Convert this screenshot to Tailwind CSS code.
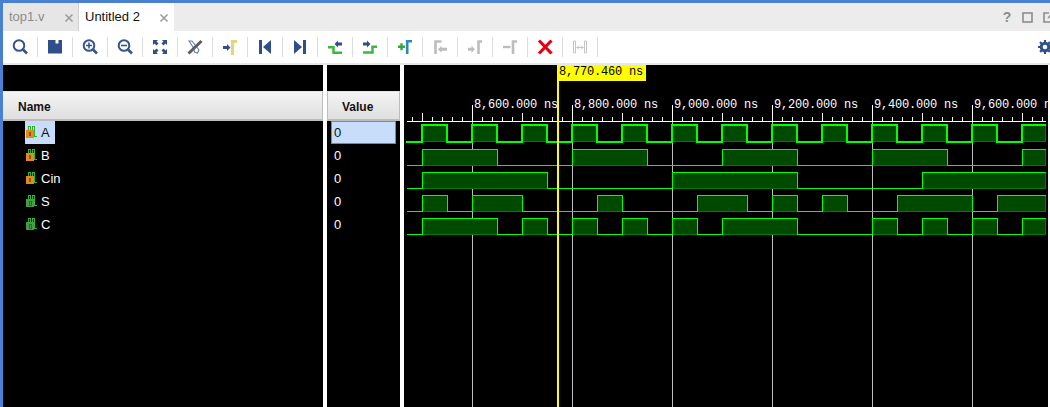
<!DOCTYPE html>
<html>
<head>
<meta charset="utf-8">
<script src="https://cdn.jsdelivr.net/npm/@tailwindcss/browser@4"></script>
</head>
<body class="m-0 bg-black">
<div class="w-[1050px] h-[407px] overflow-hidden bg-[#4a80d2] pt-[3px] pl-[3px] flex flex-col font-['Liberation_Sans',sans-serif]">

  <!-- tabs -->
  <div class="h-[28px] shrink-0 bg-[#ececec] flex items-stretch text-[13px]">
    <div class="w-[76px] bg-[#e6e6e6] border-r border-[#cfcfcf] flex items-center justify-between pl-[6px] pr-[4px] text-[#8c8c8c]">
      <span>top1.v</span>
      <svg width="10" height="10" viewBox="0 0 10 10" class="mt-[2px]"><path d="M1.5 1.5L8.5 8.5M8.5 1.5L1.5 8.5" stroke="#9c9c9c" stroke-width="1.6"/></svg>
    </div>
    <div class="w-[95px] bg-white flex items-center justify-between pl-[6px] pr-[5px] text-[#111]">
      <span>Untitled 2</span>
      <svg width="10" height="10" viewBox="0 0 10 10" class="mt-[2px]"><path d="M1.5 1.5L8.5 8.5M8.5 1.5L1.5 8.5" stroke="#9c9c9c" stroke-width="1.6"/></svg>
    </div>
    <div class="ml-auto flex items-center gap-[10px] mr-[-4px]">
      <span class="text-[14px] font-bold text-[#8c8c8c] w-[10px] text-center">?</span>
      <svg width="11" height="11" viewBox="0 0 11 11"><rect x="1" y="1" width="9" height="9" fill="none" stroke="#8c8c8c" stroke-width="1.6"/></svg>
      <svg width="11" height="11" viewBox="0 0 11 11"><path d="M6 1H1V10H10V5" fill="none" stroke="#8c8c8c" stroke-width="1.6"/><path d="M5 6L10 1" stroke="#8c8c8c" stroke-width="1.4"/></svg>
    </div>
  </div>

  <!-- toolbar -->
  <div class="h-[32px] shrink-0 bg-white flex items-center overflow-hidden">
    <div class="w-[35px] h-5 border-r border-[#dcdcdc] flex items-center justify-center"><svg width="20" height="20" viewBox="0 0 20 20" fill="none" stroke="#35558f"><circle cx="9" cy="8.5" r="5.3" stroke-width="2"/><path d="M13 12.5L17 16.5" stroke-width="2.6"/></svg></div>
    <div class="w-[35px] h-5 border-r border-[#dcdcdc] flex items-center justify-center"><svg width="20" height="20" viewBox="0 0 20 20"><path d="M3 3H17V16.5H3Z" fill="#2f4f8c"/><rect x="10.5" y="3" width="3" height="3.5" fill="#fff"/></svg></div>
    <div class="w-[35px] h-5 border-r border-[#dcdcdc] flex items-center justify-center"><svg width="20" height="20" viewBox="0 0 20 20" fill="none" stroke="#35558f"><circle cx="9" cy="8.5" r="5.3" stroke-width="2"/><path d="M6 8.5H12M9 5.5V11.5" stroke-width="1.6"/><path d="M13 12.5L17 16.5" stroke-width="2.6"/></svg></div>
    <div class="w-[35px] h-5 border-r border-[#dcdcdc] flex items-center justify-center"><svg width="20" height="20" viewBox="0 0 20 20" fill="none" stroke="#35558f"><circle cx="9" cy="8.5" r="5.3" stroke-width="2"/><path d="M6 8.5H12" stroke-width="1.6"/><path d="M13 12.5L17 16.5" stroke-width="2.6"/></svg></div>
    <div class="w-[35px] h-5 border-r border-[#dcdcdc] flex items-center justify-center"><svg width="20" height="20" viewBox="0 0 20 20" fill="#2f4f8c"><path d="M3 3H8L6.5 4.5L8.5 6.5L6.5 8.5L4.5 6.5L3 8Z"/><path d="M17 3H12L13.5 4.5L11.5 6.5L13.5 8.5L15.5 6.5L17 8Z"/><path d="M3 17H8L6.5 15.5L8.5 13.5L6.5 11.5L4.5 13.5L3 12Z"/><path d="M17 17H12L13.5 15.5L11.5 13.5L13.5 11.5L15.5 13.5L17 12Z"/></svg></div>
    <div class="w-[35px] h-5 border-r border-[#dcdcdc] flex items-center justify-center"><svg width="20" height="20" viewBox="0 0 20 20" fill="none"><path d="M4 4H7L14 13L12.5 16L9.5 15L8 10Z" stroke="#5f7fb5" stroke-width="1.1"/><path d="M3.5 16.5L16.5 4" stroke="#5c5c5c" stroke-width="3"/></svg></div>
    <div class="w-[35px] h-5 border-r border-[#dcdcdc] flex items-center justify-center"><svg width="20" height="20" viewBox="0 0 20 20"><path d="M3 9H7V7L10.5 10.5L7 14V12H3Z" fill="#2f4f8c"/><path d="M12.5 18V4.5H17" fill="none" stroke="#e8d27a" stroke-width="3"/></svg></div>
    <div class="w-[35px] h-5 border-r border-[#dcdcdc] flex items-center justify-center"><svg width="20" height="20" viewBox="0 0 20 20" fill="#2f4f8c"><rect x="4" y="3" width="3" height="14"/><path d="M16 3L8 10L16 17Z"/></svg></div>
    <div class="w-[35px] h-5 border-r border-[#dcdcdc] flex items-center justify-center"><svg width="20" height="20" viewBox="0 0 20 20" fill="#2f4f8c"><rect x="13" y="3" width="3" height="14"/><path d="M4 3L12 10L4 17Z"/></svg></div>
    <div class="w-[35px] h-5 border-r border-[#dcdcdc] flex items-center justify-center"><svg width="20" height="20" viewBox="0 0 20 20"><path d="M3 10.3H8.5V15.7H17" fill="none" stroke="#3db83d" stroke-width="2.5"/><path d="M9.5 7L13 3.5V5.5H17V8.5H13V10.5Z" fill="#2f4f8c"/></svg></div>
    <div class="w-[35px] h-5 border-r border-[#dcdcdc] flex items-center justify-center"><svg width="20" height="20" viewBox="0 0 20 20"><path d="M3 15.5H12.5V9.7H17" fill="none" stroke="#3db83d" stroke-width="2.5"/><path d="M10.5 7L7 3.5V5.5H3V8.5H7V10.5Z" fill="#2f4f8c"/></svg></div>
    <div class="w-[35px] h-5 border-r border-[#dcdcdc] flex items-center justify-center"><svg width="20" height="20" viewBox="0 0 20 20"><path d="M3 9.8H10M6.5 6.3V13.3" stroke="#3aa63a" stroke-width="2.4"/><path d="M12.2 17V4.3H17" fill="none" stroke="#2e86c0" stroke-width="2.6"/></svg></div>
    <div class="w-[35px] h-5 border-r border-[#dcdcdc] flex items-center justify-center"><svg width="20" height="20" viewBox="0 0 20 20"><path d="M5.5 17V4.5H11.5" fill="none" stroke="#bdbdbd" stroke-width="2.6"/><path d="M8 12.3L11.5 8.8V10.8H17V13.8H11.5V15.8Z" fill="#bdbdbd"/></svg></div>
    <div class="w-[35px] h-5 border-r border-[#dcdcdc] flex items-center justify-center"><svg width="20" height="20" viewBox="0 0 20 20"><path d="M3 10.8H6.5V8.8L10 12.3L6.5 15.8V13.8H3Z" fill="#bdbdbd"/><path d="M13.5 17V4.5H17" fill="none" stroke="#bdbdbd" stroke-width="2.6"/></svg></div>
    <div class="w-[35px] h-5 border-r border-[#dcdcdc] flex items-center justify-center"><svg width="20" height="20" viewBox="0 0 20 20"><path d="M3 10H10.5" stroke="#bdbdbd" stroke-width="2.4"/><path d="M13 17V4.5H17" fill="none" stroke="#bdbdbd" stroke-width="2.6"/></svg></div>
    <div class="w-[35px] h-5 border-r border-[#dcdcdc] flex items-center justify-center"><svg width="20" height="20" viewBox="0 0 20 20"><path d="M4 3.5L16.5 16.5M16.5 3.5L4 16.5" stroke="#e60012" stroke-width="3.2"/></svg></div>
    <div class="w-[35px] h-5 border-r border-[#dcdcdc] flex items-center justify-center"><svg width="20" height="20" viewBox="0 0 20 20" fill="none" stroke="#c4c4c4"><path d="M3.5 4V16H5.5V4ZM14.5 4V16H16.5V4Z" stroke-width="1"/><path d="M6.5 10.5H13.5M7 10.5L9 8.5M7 10.5L9 12.5M13 10.5L11 8.5M13 10.5L11 12.5" stroke-width="1"/></svg></div>
    <div class="ml-auto mr-[-2px] w-[14px] h-[20px] flex items-center"><svg width="14" height="14" viewBox="0 0 14 14"><circle cx="7" cy="7" r="3.8" fill="none" stroke="#2f4f8c" stroke-width="3"/><path d="M7 0V14M0 7H14M2 2L12 12M12 2L2 12" stroke="#2f4f8c" stroke-width="2.2" stroke-dasharray="2.4 9.2"/></svg></div>
  </div>
  <div class="h-[2px] shrink-0 bg-[#e8e8e8]"></div>

  <!-- main -->
  <div class="flex-1 min-h-0 flex bg-white text-[13px]">
    <!-- name pane -->
    <div class="w-[320px] bg-black flex flex-col">
      <div class="h-[26px] shrink-0"></div>
      <div class="h-[30px] shrink-0 bg-gradient-to-b from-[#f4f4f4] to-[#dfdfdf] border-t border-b-2 border-r border-[#bdbdbd] border-t-[#e4e4e4] flex items-center pl-[15px] pt-[2px] text-[12px] font-bold text-[#111]">Name</div>
      <div class="h-[23px] flex items-center pl-[22px]">
        <div class="h-[23px] w-[30px] bg-[#c8dcfb] flex items-center text-[#111]">
          <svg width="13" height="12" viewBox="0 0 13 12" class="ml-[1px] mb-[2px]" shape-rendering="crispEdges"><path d="M2 4V0.5H4V4M6 4V0.5H8V10.5H11" fill="none" stroke="#2db52d"/><rect x="0" y="4" width="8" height="8" fill="#e5891f"/><rect x="3" y="6" width="2" height="4" fill="#8a5a1a"/></svg>
          <span class="ml-[2px] mt-[1px]">A</span>
        </div>
      </div>
      <div class="h-[23px] flex items-center pl-[22px] text-white">
        <svg width="13" height="12" viewBox="0 0 13 12" class="ml-[1px] mb-[2px]" shape-rendering="crispEdges"><path d="M2 4V0.5H4V4M6 4V0.5H8V10.5H11" fill="none" stroke="#2db52d"/><rect x="0" y="4" width="8" height="8" fill="#e5891f"/><rect x="3" y="6" width="2" height="4" fill="#8a5a1a"/></svg>
        <span class="ml-[2px] mt-[1px]">B</span>
      </div>
      <div class="h-[23px] flex items-center pl-[22px] text-white">
        <svg width="13" height="12" viewBox="0 0 13 12" class="ml-[1px] mb-[2px]" shape-rendering="crispEdges"><path d="M2 4V0.5H4V4M6 4V0.5H8V10.5H11" fill="none" stroke="#2db52d"/><rect x="0" y="4" width="8" height="8" fill="#e5891f"/><rect x="3" y="6" width="2" height="4" fill="#8a5a1a"/></svg>
        <span class="ml-[2px] mt-[1px]">Cin</span>
      </div>
      <div class="h-[23px] flex items-center pl-[22px] text-white">
        <svg width="13" height="12" viewBox="0 0 13 12" class="ml-[1px] mb-[2px]" shape-rendering="crispEdges"><path d="M2 4V0.5H4V4M6 4V0.5H8V10.5H11" fill="none" stroke="#2db52d"/><rect x="0" y="4" width="8" height="8" fill="#479a47"/><rect x="3" y="6" width="2" height="4" fill="none" stroke="#2a6a2a"/></svg>
        <span class="ml-[2px] mt-[1px]">S</span>
      </div>
      <div class="h-[23px] flex items-center pl-[22px] text-white">
        <svg width="13" height="12" viewBox="0 0 13 12" class="ml-[1px] mb-[2px]" shape-rendering="crispEdges"><path d="M2 4V0.5H4V4M6 4V0.5H8V10.5H11" fill="none" stroke="#2db52d"/><rect x="0" y="4" width="8" height="8" fill="#479a47"/><rect x="3" y="6" width="2" height="4" fill="none" stroke="#2a6a2a"/></svg>
        <span class="ml-[2px] mt-[1px]">C</span>
      </div>
    </div>
    <div class="w-[4px] shrink-0"></div>
    <!-- value pane -->
    <div class="w-[73px] bg-black flex flex-col">
      <div class="h-[26px] shrink-0"></div>
      <div class="h-[30px] shrink-0 bg-gradient-to-b from-[#f4f4f4] to-[#dfdfdf] border border-b-2 border-[#bdbdbd] border-t-[#e4e4e4] flex items-center pl-[14px] pt-[2px] text-[12px] font-bold text-[#111]">Value</div>
      <div class="h-[23px] pl-[4px] pr-[4px]">
        <div class="h-[23px] bg-[#c8dcfb] border border-[#5b8fc7] flex items-center pl-[2px] pt-[1px] text-[#111]">0</div>
      </div>
      <div class="h-[23px] flex items-center pl-[7px] pt-[1px] text-white">0</div>
      <div class="h-[23px] flex items-center pl-[7px] pt-[1px] text-white">0</div>
      <div class="h-[23px] flex items-center pl-[7px] pt-[1px] text-white">0</div>
      <div class="h-[23px] flex items-center pl-[7px] pt-[1px] text-white">0</div>
    </div>
    <div class="w-[4px] shrink-0"></div>
    <!-- wave pane: page x = svg x + 404, page y = svg y + 65 -->
    <div class="w-[644px] bg-black relative overflow-hidden">
      <svg width="644" height="342" viewBox="404 65 644 342" class="block font-['Liberation_Mono',monospace]" shape-rendering="crispEdges">
        <!-- grid lines -->
        <path d="M472.5 121V407M572.5 121V407M672.5 121V407M772.5 121V407M872.5 121V407M972.5 121V407" stroke="#bfbfbf" fill="none"/>
        <path d="M472.5 105V121M572.5 105V121M672.5 105V121M772.5 105V121M872.5 105V121M972.5 105V121" stroke="#fff" fill="none"/>
        <!-- ruler -->
        <path d="M407 121.5H1046" stroke="#fff"/>
        <path d="M412.5 117V121M432.5 117V121M442.5 117V121M452.5 117V121M462.5 117V121M482.5 117V121M492.5 117V121M502.5 117V121M512.5 117V121M532.5 117V121M542.5 117V121M552.5 117V121M562.5 117V121M582.5 117V121M592.5 117V121M602.5 117V121M612.5 117V121M632.5 117V121M642.5 117V121M652.5 117V121M662.5 117V121M682.5 117V121M692.5 117V121M702.5 117V121M712.5 117V121M732.5 117V121M742.5 117V121M752.5 117V121M762.5 117V121M782.5 117V121M792.5 117V121M802.5 117V121M812.5 117V121M832.5 117V121M842.5 117V121M852.5 117V121M862.5 117V121M882.5 117V121M892.5 117V121M902.5 117V121M912.5 117V121M932.5 117V121M942.5 117V121M952.5 117V121M962.5 117V121M982.5 117V121M992.5 117V121M1002.5 117V121M1012.5 117V121M1032.5 117V121M1042.5 117V121" stroke="#fff"/>
        <path d="M422.5 113V121M522.5 113V121M622.5 113V121M722.5 113V121M822.5 113V121M922.5 113V121M1022.5 113V121" stroke="#fff"/>
        <g fill="#fff" font-size="12" letter-spacing="-0.2" shape-rendering="auto">
          <text x="474" y="108">8,600.000 ns</text>
          <text x="574" y="108">8,800.000 ns</text>
          <text x="674" y="108">9,000.000 ns</text>
          <text x="774" y="108">9,200.000 ns</text>
          <text x="874" y="108">9,400.000 ns</text>
          <text x="974" y="108">9,600.000 ns</text>
        </g>
        <!-- fills with a dim outline; bright signal lines go on top -->
        <g fill="#004a00" stroke="#007a00" transform="translate(0.5 0.5)">
          <path d="M422 125H447V141H422ZM472 125H497V141H472ZM522 125H547V141H522ZM572 125H597V141H572ZM622 125H647V141H622ZM672 125H697V141H672ZM722 125H747V141H722ZM772 125H797V141H772ZM822 125H847V141H822ZM872 125H897V141H872ZM922 125H947V141H922ZM972 125H997V141H972ZM1022 125H1045V141H1022Z"/>
          <path d="M422 149H497V165H422ZM572 149H647V165H572ZM722 149H797V165H722ZM872 149H947V165H872ZM1022 149H1045V165H1022Z"/>
          <path d="M422 172H547V188H422ZM672 172H797V188H672ZM922 172H1045V188H922Z"/>
          <path d="M422 195H447V211H422ZM472 195H522V211H472ZM597 195H622V211H597ZM697 195H747V211H697ZM772 195H797V211H772ZM822 195H847V211H822ZM897 195H972V211H897ZM997 195H1045V211H997Z"/>
          <path d="M422 218H497V234H422ZM522 218H547V234H522ZM572 218H597V234H572ZM622 218H647V234H622ZM672 218H697V234H672ZM722 218H797V234H722ZM872 218H897V234H872ZM922 218H947V234H922ZM972 218H997V234H972ZM1022 218H1045V234H1022Z"/>
        </g>
        <!-- signal lines -->
        <g fill="none" stroke="#00ff00">
          <path stroke-width="2" d="M406 142H422V125H447V142H472V125H497V142H522V125H547V142H572V125H597V142H622V125H647V142H672V125H697V142H722V125H747V142H772V125H797V142H822V125H847V142H872V125H897V142H922V125H947V142H972V125H997V142H1022V125H1046"/>
          <path d="M407 165.5H422.5V149.5H497.5V165.5H572.5V149.5H647.5V165.5H722.5V149.5H797.5V165.5H872.5V149.5H947.5V165.5H1022.5V149.5H1046"/>
          <path d="M407 188.5H422.5V172.5H547.5V188.5H672.5V172.5H797.5V188.5H922.5V172.5H1046"/>
          <path d="M407 211.5H422.5V195.5H447.5V211.5H472.5V195.5H522.5V211.5H597.5V195.5H622.5V211.5H697.5V195.5H747.5V211.5H772.5V195.5H797.5V211.5H822.5V195.5H847.5V211.5H897.5V195.5H972.5V211.5H997.5V195.5H1046"/>
          <path d="M407 234.5H422.5V218.5H497.5V234.5H522.5V218.5H547.5V234.5H572.5V218.5H597.5V234.5H622.5V218.5H647.5V234.5H672.5V218.5H697.5V234.5H722.5V218.5H797.5V234.5H872.5V218.5H897.5V234.5H922.5V218.5H947.5V234.5H972.5V218.5H997.5V234.5H1022.5V218.5H1046"/>
        </g>
        <!-- cursor -->
        <rect x="557" y="81" width="2" height="326" fill="#ffff00"/>
        <rect x="557" y="65" width="89" height="16" fill="#ffff00"/>
        <text x="559" y="75" fill="#000" font-size="12" letter-spacing="-0.2" shape-rendering="auto">8,770.460 ns</text>
      </svg>
    </div>
    <div class="flex-1 bg-white"></div>
  </div>
</div>
</body>
</html>
